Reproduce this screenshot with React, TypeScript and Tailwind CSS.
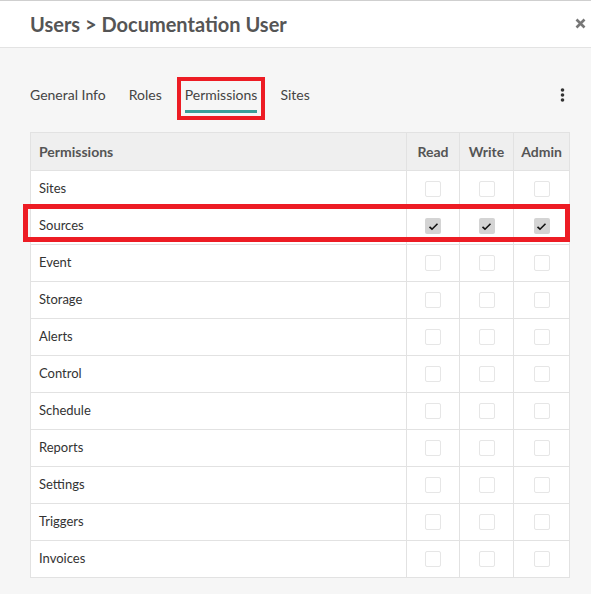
const rows = [
  'Sites',
  'Sources',
  'Event',
  'Storage',
  'Alerts',
  'Control',
  'Schedule',
  'Reports',
  'Settings',
  'Triggers',
  'Invoices',
];

function Check({ checked }: { checked: boolean }) {
  if (checked) {
    return (
      <span className="flex h-4 w-4 items-center justify-center rounded-[2px] bg-[#d4d4d4]">
        <svg width="11" height="9" viewBox="0 0 11 9" fill="none">
          <path d="M1.5 4.8 L4 7.2 L9.5 1.8" stroke="#111" strokeWidth="1.6" />
        </svg>
      </span>
    );
  }
  return <span className="block h-4 w-4 rounded-[2px] border border-[#e6e6e6] bg-white" />;
}

export default function App() {
  return (
    <div
      className="relative h-[594px] w-[591px] overflow-hidden bg-[#f6f6f6] text-[#333]"
      style={{ fontFamily: 'Lato, "Open Sans", sans-serif' }}
    >
      {/* header */}
      <div className="flex h-[48px] items-center justify-between border-t border-b border-t-[#cfcfcf] border-b-[#e3e3e3] bg-white pl-[30px] pr-[5px]">
        <h1 className="text-[20px] font-bold text-[#555]">Users &gt; Documentation User</h1>
        <svg width="11" height="11" viewBox="0 0 11 11" className="mb-[1px]">
          <path d="M1.5 1.5 L9.5 9.5 M9.5 1.5 L1.5 9.5" stroke="#777" strokeWidth="2.6" />
        </svg>
      </div>

      {/* tabs */}
      <div className="flex items-center justify-between pl-[30px] pr-[26px] pt-[36px]">
        <div className="flex gap-[23px] text-[14px] text-[#444]">
          <span className="pb-[8px]">General Info</span>
          <span className="pb-[8px]">Roles</span>
          <span className="border-b-[3px] border-[#3a9e99] pb-[5px]">Permissions</span>
          <span className="pb-[8px]">Sites</span>
        </div>
        <svg width="5" height="14" viewBox="0 0 5 14" className="mb-[8px]">
          <circle cx="2.5" cy="2" r="1.8" fill="#333" />
          <circle cx="2.5" cy="7" r="1.8" fill="#333" />
          <circle cx="2.5" cy="12" r="1.8" fill="#333" />
        </svg>
      </div>

      {/* table */}
      <div className="mx-[30px] mt-[19px] w-[540px] border border-[#e2e2e2]">
        <div className="flex h-[37px] bg-[#efefef] text-[14px] font-bold text-[#555]">
          <div className="flex flex-1 items-center pl-[8px]">Permissions</div>
          <div className="flex w-[53px] items-center justify-center border-l border-[#e2e2e2]">Read</div>
          <div className="flex w-[54px] items-center justify-center border-l border-[#e2e2e2]">Write</div>
          <div className="flex w-[56px] items-center justify-center border-l border-[#e2e2e2]">Admin</div>
        </div>
        {rows.map((r) => {
          const on = r === 'Sources';
          return (
            <div key={r} className="flex h-[37px] border-t border-[#e2e2e2] bg-white text-[13px] text-[#333]">
              <div className="flex flex-1 items-center pl-[8px]">{r}</div>
              <div className="flex w-[53px] items-center justify-center border-l border-[#e2e2e2]">
                <Check checked={on} />
              </div>
              <div className="flex w-[54px] items-center justify-center border-l border-[#e2e2e2]">
                <Check checked={on} />
              </div>
              <div className="flex w-[56px] items-center justify-center border-l border-[#e2e2e2]">
                <Check checked={on} />
              </div>
            </div>
          );
        })}
      </div>

      {/* annotation boxes */}
      <div className="absolute left-[177px] top-[77px] h-[43px] w-[88px] border-4 border-[#ed1c24]" />
      <div className="absolute left-[23px] top-[204px] h-[38px] w-[547px] border-[5px] border-[#ed1c24]" />
    </div>
  );
}
